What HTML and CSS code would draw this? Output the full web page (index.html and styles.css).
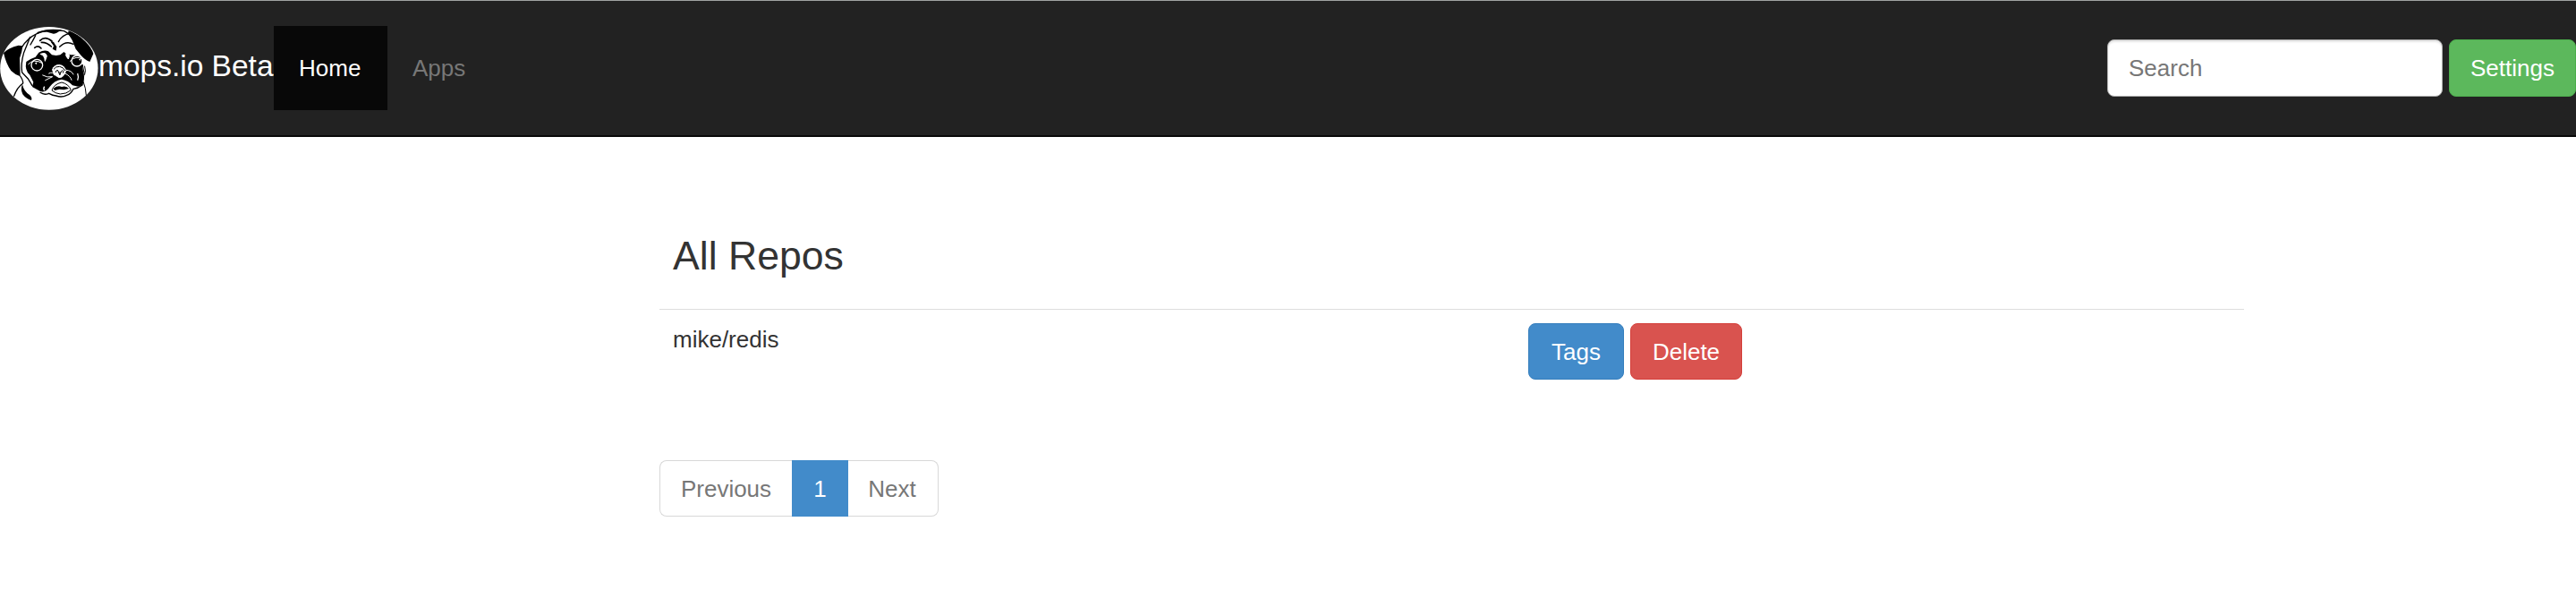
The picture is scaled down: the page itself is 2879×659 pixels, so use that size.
FILE: index.html
```html
<!DOCTYPE html>
<html lang="en">
<head>
<meta charset="utf-8">
<title>mops.io</title>
<link rel="stylesheet" href="styles.css">
</head>
<body>
<nav class="navbar">
  <svg class="logo" viewBox="0 87 330 282" aria-hidden="true">
    <ellipse cx="164.500" cy="229" rx="164" ry="139" fill="#fff"/>
    <!-- ears -->
    <path d="M12 177 Q28 160 62 152 L76 154 Q74 176 66 195 L68 256 Q50 250 37 237 Q20 213 12 177Z"/>
    <path d="M230 103 Q262 114 286 139 Q307 160 313 180 L301 207 Q284 201 270 184 L254 164 Q245 135 228 112Z"/>
    <!-- mask -->
    <path d="M88 207 Q103 196 119 191 L130 176 Q148 166 162 172 L174 184 L188 186 L202 184 L214 174 Q220 180 238 184 Q260 182 272 196 L279 240 Q284 262 278 284 L262 290 L243 286 Q230 270 207 266 Q181 270 166 292 Q154 312 135 306 L108 291 L112 275 L100 251 Q82 236 88 207Z"/>
    <!-- forehead patch -->
    <path d="M124 108 Q155 96 207 100 L190 110 Q180 115 174 112 L158 107 Q140 106 126 113Z"/>
    <path d="M170 140 Q180 136 184 148 L190 156 L188 170 L176 164 L180 154Z"/>
    <g fill="none" stroke="#000" stroke-width="4" stroke-linecap="round">
      <path d="M72 160 Q92 127 125 112 Q160 94 215 104 Q246 119 257 157 L275 185"/>
      <path d="M101 124 Q91 150 80 176 Q69 214 74 243 L94 264 L108 287"/>
      <path d="M119 119 Q111 135 102 150 M68 255 Q78 270 77 279 Q57 293 47 322"/>
      <path d="M134 136 Q152 119 174 138 M139 142 Q156 141 172 156 M116 160 Q128 151 138 162" stroke-width="5"/>
      <path d="M196 140 Q208 116 236 112 M200 157 Q221 135 246 148"/>
      <path d="M277 217 Q286 245 279 273 Q288 295 289 319 M284 222 Q289 237 284 250" stroke-width="3"/>
      <path d="M135 310 Q148 320 164 313 Q177 320 188 321 Q207 328 224 319 Q239 315 246 298 Q262 296 276 285"/>
    </g>
    <path d="M75 282 Q79 305 100 319 Q109 328 105 336 Q88 332 76 316 Q68 299 75 282Z"/>
    <!-- eyes -->
    <g fill="#000" stroke="#fff" stroke-width="4">
      <circle cx="124" cy="218" r="19"/>
      <circle cx="258" cy="204" r="18"/>
    </g>
    <g fill="none" stroke="#fff" stroke-width="3" stroke-linecap="round">
      <path d="M95 215 Q112 195 143 212 M235 205 Q255 184 275 198"/>
      <path d="M136 181 Q154 173 157 188 L151 205 Q150 186 136 181Z M222 176 Q238 179 229 198 Q217 187 222 176Z" fill="#fff"/>
      <path d="M164 246 Q178 238 183 252 M143 252 Q158 261 176 257 L152 269 M222 235 Q240 236 246 249 M218 246 Q236 254 240 268"/>
    </g>
    <path d="M116 212 l8 -4 -1 8z M264 198 l7 -2 -2 8z" fill="#fff"/>
    <!-- nose -->
    <path d="M174 233 Q181 216 199 216 Q219 219 222 239 Q212 263 197 261 Q178 252 174 233Z" fill="#fff"/>
    <path d="M180 232 Q186 222 200 223 Q213 225 218 237 M186 243 Q188 233 195 236 M209 235 Q216 238 211 245 M194 236 L200 250 L208 236 M201 240 L201 252" fill="none" stroke="#000" stroke-width="3"/>
    <!-- mouth -->
    <path d="M174 303 Q180 282 207 276 Q231 282 238 302 Q223 315 202 315 Q185 313 174 303Z" fill="#fff" stroke="#000" stroke-width="3"/>
    <path d="M179 296 Q194 285 207 291 Q222 286 231 297 L214 301 L199 299 L183 303Z"/>
    <path d="M149 290 Q144 298 149 303 M260 246 Q265 258 260 269" fill="none" stroke="#fff" stroke-width="4"/>
  </svg>
  <span class="brand">mops.io Beta</span>
  <div class="nav-links">
    <a class="nav-link active">Home</a>
    <a class="nav-link">Apps</a>
  </div>
  <div class="nav-form">
    <input class="search" type="text" placeholder="Search">
    <button class="btn btn-success">Settings</button>
  </div>
</nav>
<main class="container">
  <h3 class="title">All Repos</h3>
  <div class="repo-row">
    <span class="repo-name">mike/redis</span>
    <div class="actions">
      <button class="btn btn-primary">Tags</button>
      <button class="btn btn-danger">Delete</button>
    </div>
  </div>
  <div class="pagination">
    <a class="page prev">Previous</a>
    <a class="page current">1</a>
    <a class="page next">Next</a>
  </div>
</main>
</body>
</html>
```
FILE: styles.css
```css
* { box-sizing: border-box; }
body {
  margin: 0;
  background: #fff;
  color: #333;
  font: 26px/37px "Liberation Sans", Arial, sans-serif;
}
.navbar {
  display: flex;
  align-items: flex-start;
  height: 153px;
  padding-top: 28px;
  background: #222;
  border-top: 1px solid #a0a3a2;
  border-bottom: 2px solid #080808;
}
.logo { width: 110px; height: 94px; flex: none; }
.brand {
  width: 196px;
  padding-top: 26px;
  color: #fff;
  font-size: 33.500px;
  white-space: nowrap;
}
.nav-links { display: flex; }
.nav-link {
  height: 94px;
  padding: 29px 28px 0;
  color: #777;
}
.nav-link.active {
  width: 127px;
  background: #080808;
  color: #fff;
}
.nav-form {
  display: flex;
  gap: 7px;
  margin: 15px 0 0 auto;
}
.search {
  width: 375px;
  height: 64px;
  padding: 0 23px;
  border: 1px solid #aaa;
  border-radius: 8px;
  box-shadow: inset 0 2px 2px rgba(0, 0, 0, .1);
  font: inherit;
}
.search::placeholder { color: #777; opacity: 1; }
.btn {
  height: 63px;
  padding: 1px 0 0;
  border: 1px solid;
  border-radius: 8px;
  color: #fff;
  font: inherit;
}
.btn-success { width: 142px; height: 64px; background: #5cb85c; border-color: #4cae4c; }
.btn-primary { width: 107px; background: #428bca; border-color: #357ebd; }
.btn-danger { width: 125px; background: #d9534f; border-color: #d43f3a; }
.container { width: 1771px; margin-left: 737px; }
.title {
  margin: 0;
  padding: 108px 15px 35px;
  font-size: 44.600px;
  font-weight: 400;
  line-height: 49px;
}
.repo-row {
  display: grid;
  grid-template-columns: 971px auto;
  height: 169px;
  padding-top: 15px;
  border-top: 1px solid #ddd;
}
.repo-name { padding-left: 15px; }
.actions { display: flex; gap: 7px; align-items: flex-start; }
.pagination { display: flex; height: 63px; }
.page {
  border: 1px solid #d8d8d8;
  color: #777;
  line-height: 62px;
  text-align: center;
}
.prev { width: 148px; border-right: 0; border-radius: 8px 0 0 8px; }
.current { width: 63px; background: #428bca; border-color: #428bca; color: #fff; }
.next { width: 101px; padding-right: 2px; border-left: 0; border-radius: 0 8px 8px 0; }
```
